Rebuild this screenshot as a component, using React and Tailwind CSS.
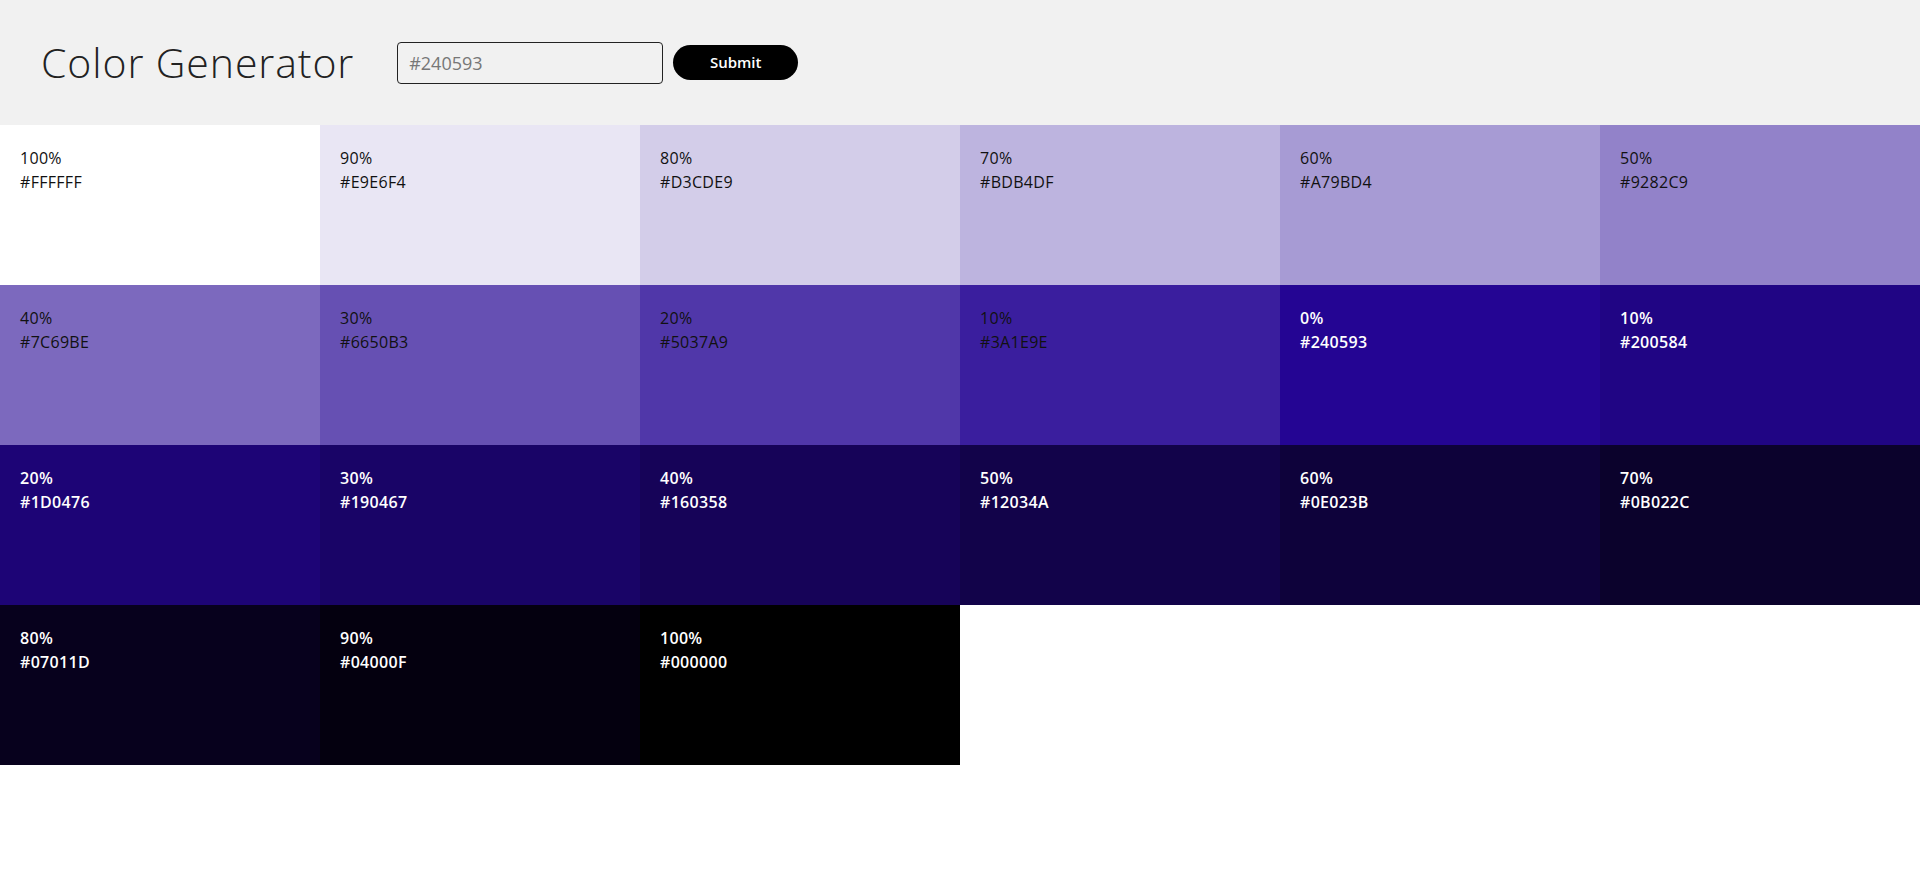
import React, { useState } from "react";

const TINTS = [
  { weight: "100%", hex: "#FFFFFF" },
  { weight: "90%", hex: "#E9E6F4" },
  { weight: "80%", hex: "#D3CDE9" },
  { weight: "70%", hex: "#BDB4DF" },
  { weight: "60%", hex: "#A79BD4" },
  { weight: "50%", hex: "#9282C9" },
  { weight: "40%", hex: "#7C69BE" },
  { weight: "30%", hex: "#6650B3" },
  { weight: "20%", hex: "#5037A9" },
  { weight: "10%", hex: "#3A1E9E" },
];
const SHADES = [
  { weight: "0%", hex: "#240593" },
  { weight: "10%", hex: "#200584" },
  { weight: "20%", hex: "#1D0476" },
  { weight: "30%", hex: "#190467" },
  { weight: "40%", hex: "#160358" },
  { weight: "50%", hex: "#12034A" },
  { weight: "60%", hex: "#0E023B" },
  { weight: "70%", hex: "#0B022C" },
  { weight: "80%", hex: "#07011D" },
  { weight: "90%", hex: "#04000F" },
  { weight: "100%", hex: "#000000" },
];

function Swatch({ weight, hex, light }) {
  return (
    <article
      className={
        "h-[160px] px-5 pt-[21px] text-[16px] leading-[24px] tracking-[0.3px] " +
        (light ? "text-white font-semibold" : "text-[#111]")
      }
      style={{ backgroundColor: hex }}
    >
      <p>{weight}</p>
      <p>{hex}</p>
    </article>
  );
}

export default function App() {
  const [color, setColor] = useState("");

  return (
    <main className="min-h-screen bg-white font-['Open_Sans',sans-serif]">
      <section className="h-[125px] bg-[#f1f1f1] flex items-center pl-[41px]">
        <h1 className="text-[41px] font-light text-[#222] tracking-[0.9px] mr-[43px]">Color Generator</h1>
        <form className="flex items-center" onSubmit={e => e.preventDefault()}>
          <input
            value={color}
            onChange={e => setColor(e.target.value)}
            placeholder="#240593"
            className="w-[266px] h-[42px] border border-[#222] rounded-[4px] px-[11px] text-[18px] bg-[#f1f1f1] placeholder:text-[#777] outline-none"
          />
          <button className="ml-[10px] w-[125px] h-[35px] rounded-full bg-black text-white text-[15px] font-semibold">
            Submit
          </button>
        </form>
      </section>
      <section className="grid grid-cols-6">
        {TINTS.map(c => (
          <Swatch key={"t" + c.weight} {...c} />
        ))}
        {SHADES.map(c => (
          <Swatch key={"s" + c.weight} {...c} light />
        ))}
      </section>
    </main>
  );
}
